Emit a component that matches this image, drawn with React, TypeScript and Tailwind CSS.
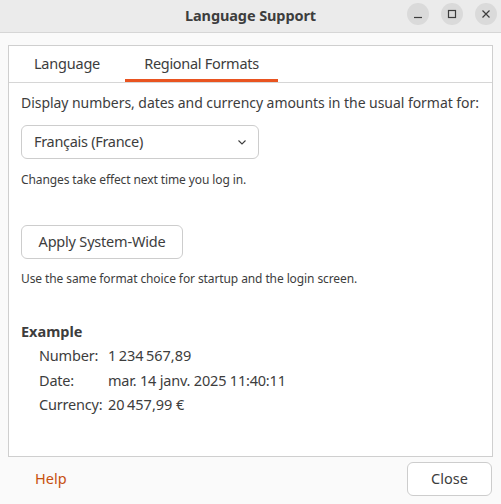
import React from "react";

export default function App() {
  return (
    <div
      className="w-[501px] h-[504px] bg-[#fafafa] flex flex-col text-[#3d3d3d] overflow-hidden"
      style={{ fontFamily: '"Noto Sans", "Open Sans", sans-serif' }}
    >
      {/* Title bar */}
      <div className="h-[33px] bg-[#ebebeb] border-b border-[#d6d6d6] flex items-center relative shrink-0">
        <div className="flex-1 text-center font-bold text-[14.5px] text-[#3d3d3d] tracking-[-0.1px]">Language Support</div>
        <div className="absolute right-[4px] top-[3px] flex gap-[12px]">
          <div className="w-[22px] h-[22px] rounded-full bg-[#dadada] flex items-center justify-center">
            <svg width="10" height="10" viewBox="0 0 10 10"><path d="M1 8.5h8" stroke="#3d3d3d" strokeWidth="1.2" /></svg>
          </div>
          <div className="w-[22px] h-[22px] rounded-full bg-[#dadada] flex items-center justify-center">
            <svg width="10" height="10" viewBox="0 0 10 10"><rect x="1.5" y="1.5" width="7" height="7" fill="none" stroke="#3d3d3d" strokeWidth="1.2" /></svg>
          </div>
          <div className="w-[22px] h-[22px] rounded-full bg-[#dadada] flex items-center justify-center">
            <svg width="10" height="10" viewBox="0 0 10 10"><path d="M1.5 1.5l7 7M8.5 1.5l-7 7" stroke="#3d3d3d" strokeWidth="1.2" /></svg>
          </div>
        </div>
      </div>

      {/* Notebook */}
      <div className="mx-[8px] mt-[12px] h-[412px] border border-[#cfcfcf] bg-white flex flex-col shrink-0">
        <div className="h-[37px] bg-white border-b border-[#d6d6d6] flex items-end shrink-0">
          <div className="w-[116px] h-full flex items-center justify-center text-[14.5px] text-[#3d3d3d] tracking-[-0.2px]">Language</div>
          <div className="w-[153px] h-full flex items-center justify-center text-[14.5px] text-[#3d3d3d] border-b-[3px] border-[#e95420] pt-[3px] tracking-[-0.3px]">
            Regional Formats
          </div>
        </div>
        <div className="px-[12px] pt-[10px] flex flex-col">
          <div className="text-[14px] leading-[20px] tracking-[-0.05px] whitespace-nowrap">Display numbers, dates and currency amounts in the usual format for:</div>
          <div className="mt-[12px] w-[238px] h-[34px] border border-[#cdcdcd] rounded-[6px] flex items-center justify-between pl-[12px] pr-[10px]">
            <span className="text-[14.5px] tracking-[-0.3px]">Français (France)</span>
            <svg width="12" height="12" viewBox="0 0 12 12"><path d="M2.5 4.5l3.5 3.5 3.5-3.5" fill="none" stroke="#3d3d3d" strokeWidth="1.1" /></svg>
          </div>
          <div className="mt-[13px] text-[12px] leading-[16px] tracking-[-0.1px]">Changes take effect next time you log in.</div>
          <div className="mt-[37px] w-[162px] h-[34px] border border-[#cdcdcd] rounded-[6px] flex items-center justify-center text-[14.5px] tracking-[-0.2px]">
            Apply System-Wide
          </div>
          <div className="mt-[12px] text-[12px] leading-[16px] tracking-[-0.1px]">Use the same format choice for startup and the login screen.</div>
          <div className="mt-[34px] font-bold text-[14.5px] leading-[20px]">Example</div>
          <div className="mt-[4px] pl-[18px] grid grid-cols-[69px_1fr] gap-y-[4.5px] text-[14.5px] leading-[20px] tracking-[-0.2px]">
            <span>Number:</span>
            <span>{"1\u202F234\u202F567,89"}</span>
            <span>Date:</span>
            <span>mar. 14 janv. 2025 11:40:11</span>
            <span>Currency:</span>
            <span>{"20\u202F457,99\u00A0€"}</span>
          </div>
        </div>
      </div>

      {/* Footer */}
      <div className="flex items-center justify-between pl-[35px] pr-[9px] mt-[5px]">
        <span className="text-[14.5px] text-[#c7500f]">Help</span>
        <div className="w-[85px] h-[34px] border border-[#cdcdcd] rounded-[6px] flex items-center justify-center text-[14.5px] bg-white">
          Close
        </div>
      </div>
    </div>
  );
}
